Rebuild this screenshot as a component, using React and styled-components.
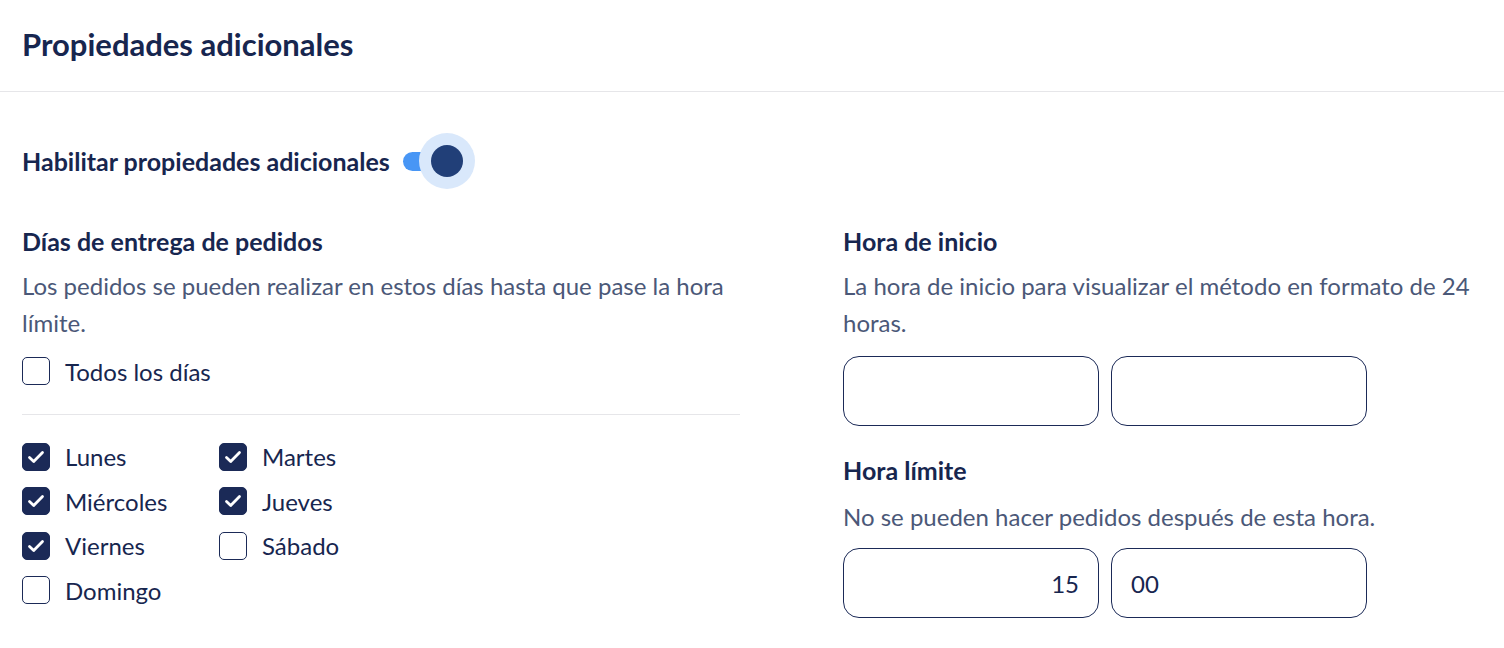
import React from "react";
import styled, { createGlobalStyle } from "styled-components";

const GlobalStyle = createGlobalStyle`
  body {
    margin: 0;
    background: #fff;
    font-family: "Source Sans Pro", Lato, "Noto Sans", sans-serif;
    color: #17264f;
  }
`;

const Page = styled.div`
  width: 1504px;
`;

const Header = styled.div`
  height: 92px;
  padding: 0 22px 4px;
  box-sizing: border-box;
  display: flex;
  align-items: center;
  border-bottom: 1px solid #e6e6e9;
`;

const Title = styled.h1`
  margin: 0;
  font-size: 31px;
  font-weight: 700;
  color: #17264f;
`;

const Body = styled.div`
  padding: 38px 22px 0;
`;

const ToggleRow = styled.div`
  display: flex;
  align-items: center;
  gap: 13px;
  height: 62px;
`;

const Label = styled.span`
  font-size: 25px;
  font-weight: 700;
  color: #17264f;
`;

const Track = styled.div`
  position: relative;
  width: 52px;
  height: 19px;
  border-radius: 10px;
  background: #4896f5;
`;

const Halo = styled.div`
  position: absolute;
  right: -20px;
  top: 50%;
  width: 56px;
  height: 56px;
  margin-top: -28px;
  border-radius: 50%;
  background: #d9e8fb;
  display: flex;
  align-items: center;
  justify-content: center;
`;

const Thumb = styled.div`
  width: 32px;
  height: 32px;
  border-radius: 50%;
  background: #213f78;
`;

const Columns = styled.div`
  display: grid;
  grid-template-columns: 718px 1fr;
  column-gap: 103px;
  margin-top: 31px;
`;

const Column = styled.div`
  display: flex;
  flex-direction: column;
`;

const SectionTitle = styled.div`
  font-size: 25px;
  font-weight: 700;
  line-height: 36px;
  color: #17264f;
`;

const Description = styled.p`
  margin: ${(p) => p.$top || "8px"} 0 0;
  font-size: 24px;
  line-height: 37px;
  color: #4b5878;
`;

const CheckRow = styled.label`
  display: flex;
  align-items: center;
  gap: 15px;
  height: 44.5px;
  font-size: 24px;
  color: #17264f;
  margin-top: ${(p) => p.$top || "0"};
`;

const Box = styled.span`
  width: 28px;
  height: 28px;
  flex: none;
  box-sizing: border-box;
  border-radius: 5px;
  border: 1.5px solid #1b2a57;
  background: ${(p) => (p.$checked ? "#1b2a57" : "#fff")};
  display: flex;
  align-items: center;
  justify-content: center;
`;

const Divider = styled.div`
  height: 1px;
  background: #e6e6e9;
  margin: 20px 0 20px;
`;

const DayGrid = styled.div`
  display: grid;
  grid-template-columns: 197px 197px;
`;

const InputRow = styled.div`
  display: flex;
  gap: 12px;
  margin-top: ${(p) => p.$top || "15px"};
`;

const TimeInput = styled.div`
  width: 256px;
  height: 70px;
  box-sizing: border-box;
  border: 1.5px solid #1b2a57;
  border-radius: 16px;
  display: flex;
  align-items: center;
  justify-content: ${(p) => (p.$right ? "flex-end" : "flex-start")};
  padding: 0 19px;
  font-size: 24px;
  color: #17264f;
`;

const Spaced = styled.div`
  margin-top: 26px;
`;

function Check({ checked, top, children }) {
  return (
    <CheckRow $top={top}>
      <Box $checked={checked}>
        {checked && (
          <svg width="22" height="22" viewBox="0 0 22 22">
            <path
              d="M4.5 11.5l4.2 4L17.5 6.5"
              fill="none"
              stroke="#fff"
              strokeWidth="2.8"
              strokeLinecap="round"
              strokeLinejoin="round"
            />
          </svg>
        )}
      </Box>
      {children}
    </CheckRow>
  );
}

const days = [
  ["Lunes", true],
  ["Martes", true],
  ["Miércoles", true],
  ["Jueves", true],
  ["Viernes", true],
  ["Sábado", false],
  ["Domingo", false],
];

export default function App() {
  return (
    <Page>
      <GlobalStyle />
      <Header>
        <Title>Propiedades adicionales</Title>
      </Header>
      <Body>
        <ToggleRow>
          <Label>Habilitar propiedades adicionales</Label>
          <Track>
            <Halo>
              <Thumb />
            </Halo>
          </Track>
        </ToggleRow>
        <Columns>
          <Column>
            <SectionTitle>Días de entrega de pedidos</SectionTitle>
            <Description>
              Los pedidos se pueden realizar en estos días hasta que pase la hora límite.
            </Description>
            <Check checked={false} top="8px">
              Todos los días
            </Check>
            <Divider />
            <DayGrid>
              {days.map(([d, c]) => (
                <Check key={d} checked={c}>
                  {d}
                </Check>
              ))}
            </DayGrid>
          </Column>
          <Column>
            <SectionTitle>Hora de inicio</SectionTitle>
            <Description>
              La hora de inicio para visualizar el método en formato de 24 horas.
            </Description>
            <InputRow>
              <TimeInput />
              <TimeInput />
            </InputRow>
            <Spaced>
              <SectionTitle>Hora límite</SectionTitle>
              <Description $top="10px">
                No se pueden hacer pedidos después de esta hora.
              </Description>
              <InputRow $top="13px">
                <TimeInput $right>15</TimeInput>
                <TimeInput>00</TimeInput>
              </InputRow>
            </Spaced>
          </Column>
        </Columns>
      </Body>
    </Page>
  );
}
